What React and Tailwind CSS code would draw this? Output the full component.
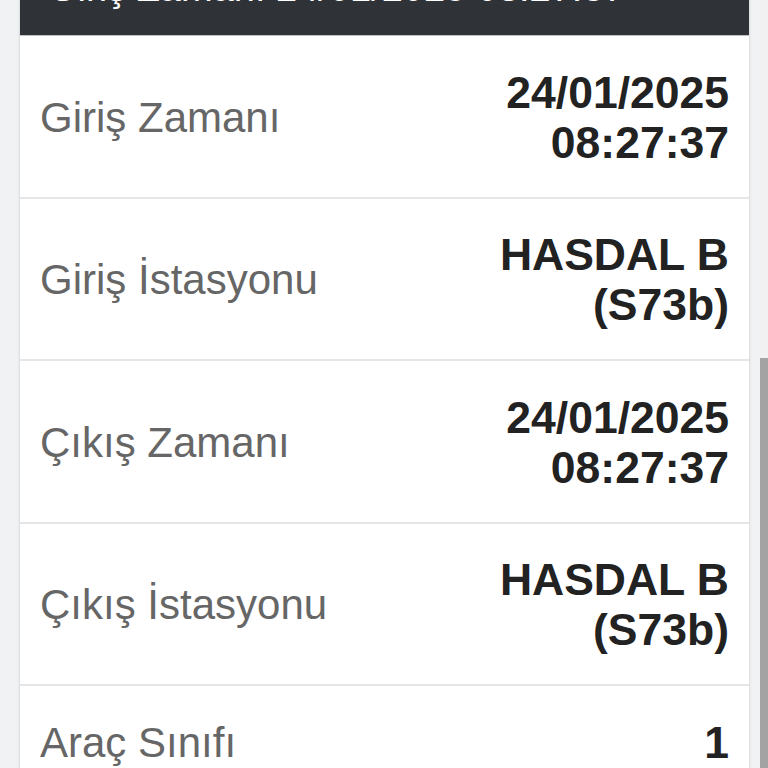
import React from "react";

const rows = [
  { label: "Giriş Zamanı", value: ["24/01/2025", "08:27:37"] },
  { label: "Giriş İstasyonu", value: ["HASDAL B", "(S73b)"] },
  { label: "Çıkış Zamanı", value: ["24/01/2025", "08:27:37"] },
  { label: "Çıkış İstasyonu", value: ["HASDAL B", "(S73b)"] },
  { label: "Araç Sınıfı", value: ["1"] },
];

const App = () => {
  return (
    <div
      className="relative w-[768px] h-[768px] overflow-hidden bg-[#f1f2f4]"
      style={{ fontFamily: '"Liberation Sans", Arial, sans-serif' }}
    >
      {/* Card */}
      <div className="ml-[20px] w-[729px] bg-white shadow-[0_0_3px_rgba(0,0,0,0.18)]">
        {/* Header (scrolled, only bottom visible) */}
        <div className="h-[36px] overflow-hidden bg-[#2f3237] border-b border-[#bfc1c4]">
          <div className="mt-[-34px] pl-[28px] text-[38px] leading-[44px] font-medium text-white whitespace-nowrap">
            Giriş Zamanı 24/01/2025 08:27:37
          </div>
        </div>

        {/* Rows */}
        {rows.map((row, i) => (
          <div
            key={i}
            className="flex items-center justify-between px-[20px] pt-[31.75px] pb-[28.75px] border-b-2 border-[#e6e6e6]"
          >
            <span className="text-[42px] text-[#666666] leading-[50px]">{row.label}</span>
            <div className="text-right text-[44.5px] font-bold text-[#222222] leading-[50px]">
              {row.value.map((v, j) => (
                <div key={j}>{v}</div>
              ))}
            </div>
          </div>
        ))}
      </div>

      {/* Scrollbar */}
      <div className="absolute right-0 top-0 w-[9px] h-full bg-[#f1f1f1]" />
      <div className="absolute right-0 top-[358px] w-[8px] h-[410px] bg-[#a3a3a3]" />
    </div>
  );
};

export default App;
